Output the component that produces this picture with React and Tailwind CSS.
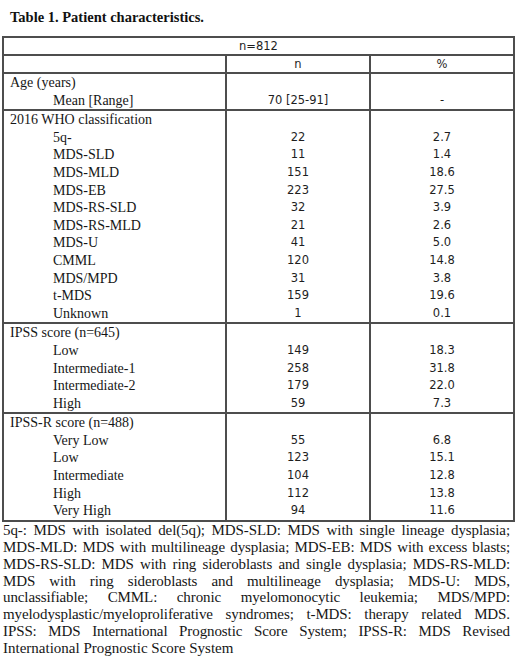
// Table 1 — patient characteristics (static reproduction)
const serif = "font-['Liberation_Serif','Times_New_Roman',serif]"
const sans = "font-['DejaVu_Sans','Verdana',sans-serif]"

// ── Data ──────────────────────────────────────────────────────────────────────
const BLOCKS = [
  {
    title: 'Age (years)',
    rows: [['Mean [Range]', '70 [25-91]', '-']],
  },
  {
    title: '2016 WHO classification',
    rows: [
      ['5q-', '22', '2.7'],
      ['MDS-SLD', '11', '1.4'],
      ['MDS-MLD', '151', '18.6'],
      ['MDS-EB', '223', '27.5'],
      ['MDS-RS-SLD', '32', '3.9'],
      ['MDS-RS-MLD', '21', '2.6'],
      ['MDS-U', '41', '5.0'],
      ['CMML', '120', '14.8'],
      ['MDS/MPD', '31', '3.8'],
      ['t-MDS', '159', '19.6'],
      ['Unknown', '1', '0.1'],
    ],
  },
  {
    title: 'IPSS score (n=645)',
    rows: [
      ['Low', '149', '18.3'],
      ['Intermediate-1', '258', '31.8'],
      ['Intermediate-2', '179', '22.0'],
      ['High', '59', '7.3'],
    ],
  },
  {
    title: 'IPSS-R score (n=488)',
    rows: [
      ['Very Low', '55', '6.8'],
      ['Low', '123', '15.1'],
      ['Intermediate', '104', '12.8'],
      ['High', '112', '13.8'],
      ['Very High', '94', '11.6'],
    ],
  },
]

const FOOTNOTE = [
  '5q-: MDS with isolated del(5q); MDS-SLD: MDS with single lineage dysplasia;',
  'MDS-MLD: MDS with multilineage dysplasia; MDS-EB: MDS with excess blasts;',
  'MDS-RS-SLD: MDS with ring sideroblasts and single dysplasia; MDS-RS-MLD:',
  'MDS with ring sideroblasts and multilineage dysplasia; MDS-U: MDS,',
  'unclassifiable; CMML: chronic myelomonocytic leukemia; MDS/MPD:',
  'myelodysplastic/myeloproliferative syndromes; t-MDS: therapy related MDS.',
  'IPSS: MDS International Prognostic Score System; IPSS-R: MDS Revised',
  'International Prognostic Score System',
]

// ── One bordered block of rows ────────────────────────────────────────────────
function Block({ title, rows }) {
  return (
    <div className="grid grid-cols-[221px_144px_144px] border-t-2 border-[#4d4d4d] leading-[17.6px]">
      <div className={`${serif} text-[14px] text-[#161616]`}>
        <div className="pl-[6px]">{title}</div>
        {rows.map((r) => (
          <div key={r[0]} className="pl-[49px]">{r[0]}</div>
        ))}
      </div>
      <div className={`${sans} text-[11.5px] text-[#1e1e1e] text-center border-l-2 border-[#4d4d4d]`}>
        <div>&nbsp;</div>
        {rows.map((r) => (
          <div key={r[0]}>{r[1]}</div>
        ))}
      </div>
      <div className={`${sans} text-[11.5px] text-[#1e1e1e] text-center border-l-2 border-[#4d4d4d]`}>
        <div>&nbsp;</div>
        {rows.map((r) => (
          <div key={r[0]}>{r[2]}</div>
        ))}
      </div>
    </div>
  )
}

export default function App() {
  return (
    <div className="w-[520px] h-[666px] bg-white overflow-hidden">
      {/* Title */}
      <h1 className={`${serif} font-bold text-[14.5px] leading-[20px] text-[#111] pt-[7px] pl-[10px]`}>
        Table 1. Patient characteristics.
      </h1>

      {/* Table */}
      <div className="ml-[2px] mt-[9px] w-[513px] border-2 border-[#4d4d4d]">
        <div className={`${sans} text-[11.5px] text-[#1e1e1e] text-center h-[16px] leading-[16px]`}>n=812</div>
        <div className={`grid grid-cols-[221px_144px_144px] border-t-2 border-[#4d4d4d] h-[18px] ${sans} text-[11.5px] text-[#1e1e1e] text-center leading-[16px]`}>
          <div />
          <div className="border-l-2 border-[#4d4d4d]">n</div>
          <div className="border-l-2 border-[#4d4d4d]">%</div>
        </div>
        {BLOCKS.map((b) => (
          <Block key={b.title} title={b.title} rows={b.rows} />
        ))}
      </div>

      {/* Footnote */}
      <div className={`${serif} text-[15px] leading-[16.9px] text-[#161616] ml-[3px] w-[507px]`}>
        {FOOTNOTE.map((line, i) => (
          <div
            key={i}
            className={
              i < FOOTNOTE.length - 1
                ? 'whitespace-nowrap tracking-[-0.1px] text-justify [text-align-last:justify]'
                : 'whitespace-nowrap'
            }
          >
            {line}
          </div>
        ))}
      </div>
    </div>
  )
}
